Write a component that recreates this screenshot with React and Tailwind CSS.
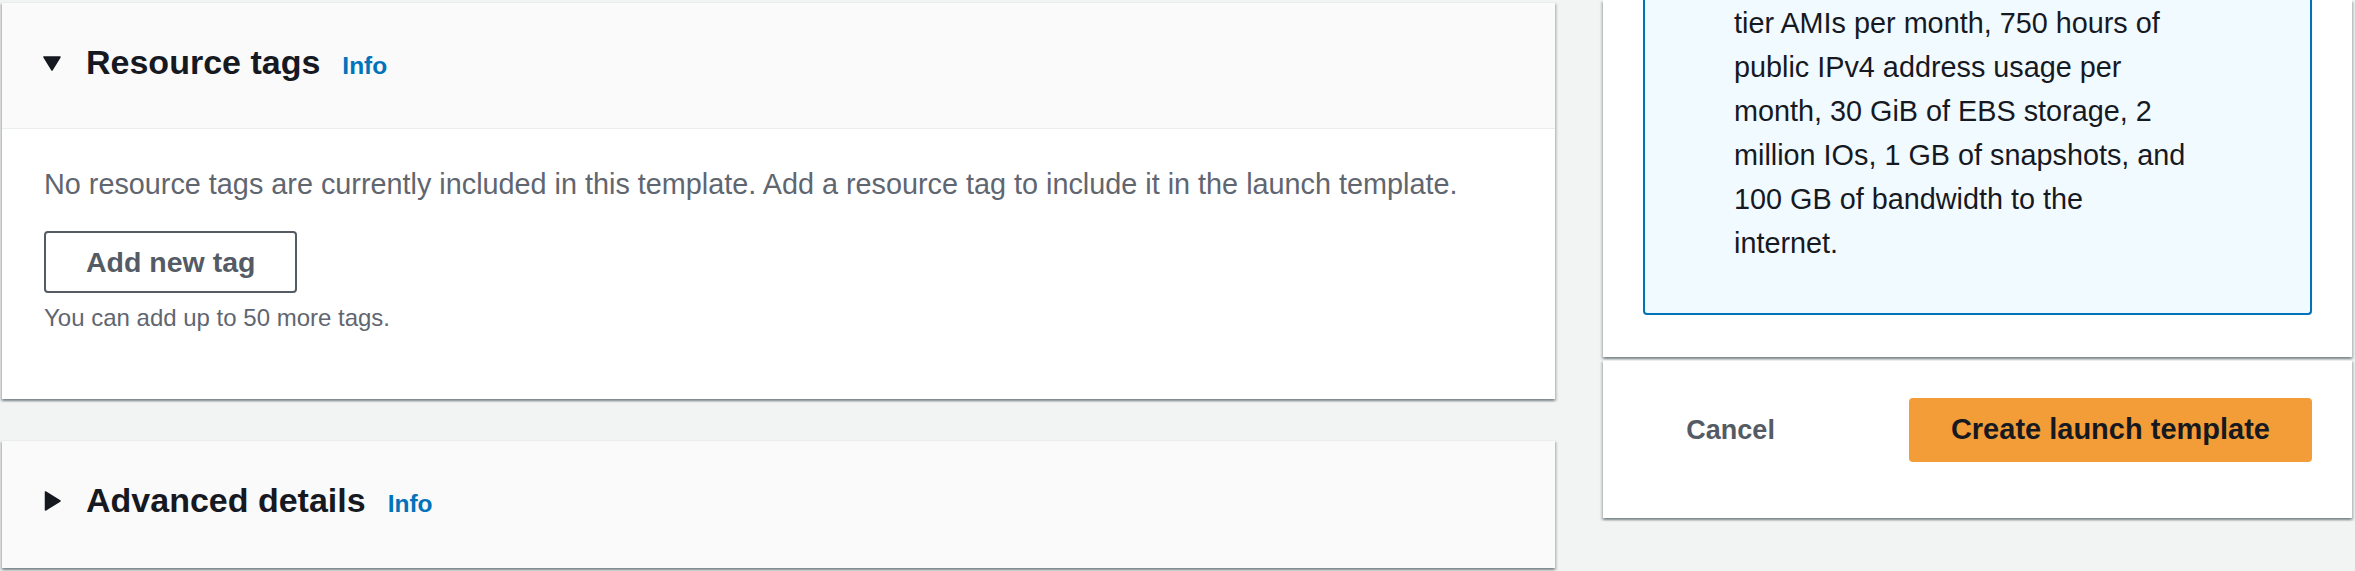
import React from "react";

const shadow =
  "shadow-[0_2px_2px_0_rgba(0,28,36,0.3),2px_2px_2px_0_rgba(0,28,36,0.15),-2px_2px_2px_0_rgba(0,28,36,0.15)]";

function TriDown() {
  return (
    <svg width="18" height="15" viewBox="0 0 18 15" className="shrink-0">
      <path d="M1 1 H17 L9 14 Z" fill="#16191f" stroke="#16191f" strokeWidth="1.5" strokeLinejoin="round" />
    </svg>
  );
}

function TriRight() {
  return (
    <svg width="17" height="20" viewBox="0 0 17 20" className="shrink-0">
      <path d="M1.5 1 V19 L16 10 Z" fill="#16191f" stroke="#16191f" strokeWidth="1.5" strokeLinejoin="round" />
    </svg>
  );
}

function Header({ open, title }) {
  return (
    <div className="flex items-center h-[40px]">
      <div className="w-[18px] flex justify-center">{open ? <TriDown /> : <TriRight />}</div>
      <div className="flex items-baseline ml-[25px] gap-[22px]">
        <h2 className="text-[34px] leading-[40px] font-bold text-[#16191f]">{title}</h2>
        <a className="text-[24.5px] font-bold text-[#0073bb]">Info</a>
      </div>
    </div>
  );
}

export default function App() {
  return (
    <div
      className="w-[2355px] h-[571px] overflow-hidden bg-[#f2f3f3] flex items-start pl-[2px]"
      style={{ fontFamily: '"Liberation Sans", Arial, sans-serif' }}
    >
      {/* Left column */}
      <div className="w-[1553px] pt-[2px] flex flex-col">
        <div className={`bg-white border-t border-[#eaeded] ${shadow}`}>
          <div className="h-[126px] bg-[#fafafa] border-b border-[#eaeded] pt-[40px] pl-[41px]">
            <Header open title="Resource tags" />
          </div>
          <div className="pl-[42px] pt-[35px] pb-[64px]">
            <p className="text-[28.8px] leading-[40px] text-[#5f6670]">
              No resource tags are currently included in this template. Add a resource tag to include it in the launch template.
            </p>
            <button className="mt-[27px] h-[62px] px-[40px] border-2 border-[#545b64] rounded-[4px] bg-white text-[28.5px] font-bold text-[#545b64]">
              Add new tag
            </button>
            <p className="mt-[8px] text-[24px] leading-[34px] text-[#5f6670]">You can add up to 50 more tags.</p>
          </div>
        </div>
        <div className={`mt-[41px] h-[128px] bg-[#fafafa] border-t border-[#eaeded] pt-[40px] pl-[41px] ${shadow}`}>
          <Header title="Advanced details" />
        </div>
      </div>

      {/* Right column */}
      <div className="ml-[48px] w-[749px] flex flex-col">
        <div className={`bg-white px-[40px] pb-[42px] ${shadow}`}>
          <div className="bg-[#f1faff] border-2 border-t-0 border-[#0073bb] rounded-b-[4px] pl-[89px] pt-[1px] pb-[48px]">
            <p className="text-[28.8px] leading-[44px] text-[#16191f]">
              tier AMIs per month, 750 hours of
              <br />
              public IPv4 address usage per
              <br />
              month, 30 GiB of EBS storage, 2
              <br />
              million IOs, 1 GB of snapshots, and
              <br />
              100 GB of bandwidth to the
              <br />
              internet.
            </p>
          </div>
        </div>
        <div className={`mt-[3px] bg-white border-t border-[#eaeded] h-[158px] pt-[37px] pr-[40px] flex items-start justify-end ${shadow}`}>
          <button className="h-[64px] mr-[134px] text-[27px] font-bold text-[#545b64]">Cancel</button>
          <button className="h-[64px] px-[42px] rounded-[4px] bg-[#f29d38] text-[29px] font-bold text-[#16191f]">
            Create launch template
          </button>
        </div>
      </div>
    </div>
  );
}
